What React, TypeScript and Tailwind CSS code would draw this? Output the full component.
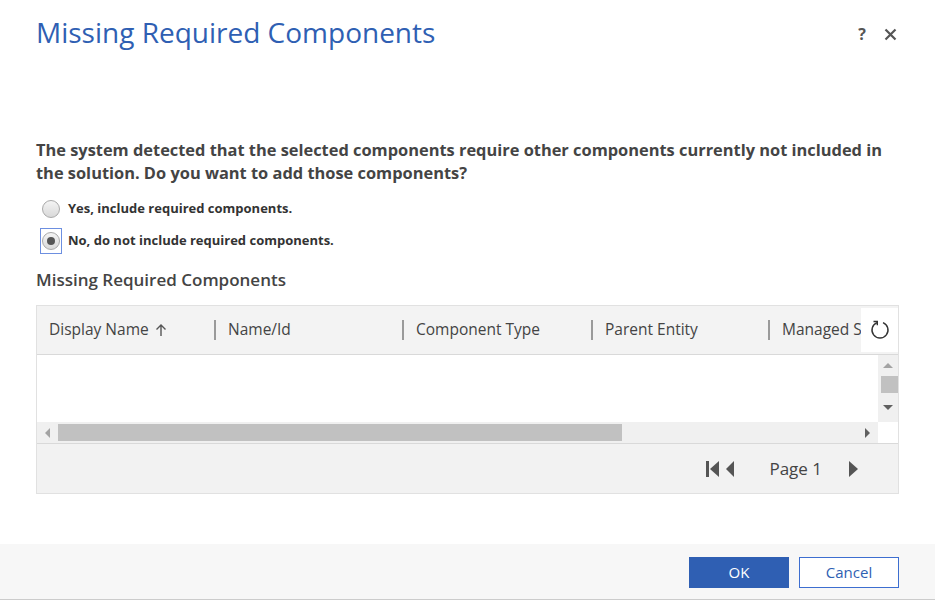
import { useState } from "react";

const COLUMNS = [
  { label: "Display Name", width: "w-[177px]", sort: true },
  { label: "Name/Id", width: "w-[188px]" },
  { label: "Component Type", width: "w-[189px]" },
  { label: "Parent Entity", width: "w-[177px]" },
  { label: "Managed Solution", width: "flex-1" },
];

function Radio({ checked, focused, label, onClick }: { checked: boolean; focused?: boolean; label: string; onClick: () => void }) {
  return (
    <button onClick={onClick} className="flex items-center gap-[6px] h-[26px] text-left">
      <span className={`flex items-center justify-center w-[22px] h-[26px] ${focused ? "border border-[#6d8fe0]" : "border border-transparent"}`}>
        <span className="flex items-center justify-center w-[18px] h-[18px] rounded-full border border-[#a9a9a9] bg-gradient-to-b from-[#f4f4f4] to-[#d9d9d9]">
          {checked && <span className="w-[8px] h-[8px] rounded-full bg-[#555]" />}
        </span>
      </span>
      <span className="text-[13px] font-bold text-[#333]">{label}</span>
    </button>
  );
}

export default function App() {
  const [include, setInclude] = useState(false);

  return (
    <div className="w-[935px] h-[600px] bg-white flex flex-col text-[#444]" style={{ fontFamily: '"Open Sans", "Noto Sans", sans-serif' }}>
      {/* Header */}
      <div className="flex items-start justify-between pl-[36px] pr-[38px] pt-[12px]">
        <h1 className="text-[28px] leading-[40px] text-[#2f5fb3]">Missing Required Components</h1>
        <div className="flex items-center gap-[18px] mt-[14px] text-[#555]">
          <span className="text-[16px] font-bold leading-none">?</span>
          <svg width="13" height="13" viewBox="0 0 13 13" className="stroke-[#555]" strokeWidth="2.2">
            <path d="M1.5 1.5 L11.5 11.5 M11.5 1.5 L1.5 11.5" />
          </svg>
        </div>
      </div>

      {/* Body */}
      <div className="px-[36px] pt-[86px]">
        <p className="text-[16.4px] font-bold leading-[23px] text-[#444]">
          The system detected that the selected components require other components currently not included in the solution. Do you want to add those components?
        </p>

        <div className="flex flex-col gap-[6px] mt-[12px] ml-[4px]">
          <Radio checked={include} label="Yes, include required components." onClick={() => setInclude(true)} />
          <Radio checked={!include} focused label="No, do not include required components." onClick={() => setInclude(false)} />
        </div>

        <h2 className="text-[17px] font-semibold text-[#444] mt-[14px] leading-[24px]">Missing Required Components</h2>

        {/* Grid */}
        <div className="mt-[13px] border border-[#e1e1e1] flex flex-col">
          <div className="flex h-[49px] bg-[#f3f3f3] border-b border-[#d9d9d9] items-center">
            {COLUMNS.map((c, i) => (
              <div key={c.label} className={`${c.width} h-full flex items-center overflow-hidden whitespace-nowrap`}>
                {i > 0 && <span className="w-[2px] h-[20px] bg-[#9a9a9a] mr-[12px] shrink-0" />}
                <span className={`text-[15.5px] text-[#444] ${i === 0 ? "pl-[12px]" : ""}`}>{c.label}</span>
                {c.sort && (
                  <svg width="12" height="14" viewBox="0 0 12 14" className="ml-[6px] stroke-[#555]" strokeWidth="1.4" fill="none">
                    <path d="M6 13 V2 M1.5 6.5 L6 2 L10.5 6.5" />
                  </svg>
                )}
              </div>
            ))}
            <div className="w-[37px] h-[44px] bg-white flex items-center justify-center shrink-0">
              <svg width="22" height="22" viewBox="0 0 22 22" fill="none" className="stroke-[#333]" strokeWidth="1.4">
                <path d="M8 3.6 A8 8 0 1 0 14 3.6" />
                <path d="M4.5 2.5 H8.3 V6.3" />
              </svg>
            </div>
          </div>

          {/* rows area + vertical scrollbar */}
          <div className="flex h-[67px]">
            <div className="flex-1 bg-white" />
            <div className="w-[20px] bg-[#f0f0f0] flex flex-col items-center pt-[8px]">
              <span className="w-0 h-0 border-l-[5px] border-r-[5px] border-b-[5px] border-l-transparent border-r-transparent border-b-[#a3a3a3]" />
              <span className="w-[17px] h-[17px] bg-[#c1c1c1] mt-[8px] ml-[2px]" />
              <span className="w-0 h-0 border-l-[5px] border-r-[5px] border-t-[5px] border-l-transparent border-r-transparent border-t-[#606060] mt-[12px]" />
            </div>
          </div>

          {/* horizontal scrollbar */}
          <div className="flex h-[21px]">
            <div className="flex-1 bg-[#f0f0f0] flex items-center">
              <span className="ml-[8px] w-0 h-0 border-t-[5px] border-b-[5px] border-r-[5px] border-t-transparent border-b-transparent border-r-[#a3a3a3]" />
              <span className="ml-[8px] w-[564px] h-[17px] bg-[#c1c1c1]" />
              <span className="flex-1" />
              <span className="mr-[8px] w-0 h-0 border-t-[5px] border-b-[5px] border-l-[5px] border-t-transparent border-b-transparent border-l-[#606060]" />
            </div>
            <div className="w-[20px] bg-white" />
          </div>

          {/* pager */}
          <div className="h-[50px] bg-[#f2f2f2] border-t border-[#d9d9d9] flex items-center justify-end pr-[38px]">
            <svg width="32" height="18" viewBox="0 0 32 18" className="fill-[#555]">
              <rect x="1" y="1" width="3" height="16" />
              <path d="M14 1 L5 9 L14 17 Z" />
              <path d="M29 1 L21 9 L29 17 Z" />
            </svg>
            <span className="text-[17px] text-[#444] ml-[32px] mr-[26px]">Page 1</span>
            <svg width="12" height="18" viewBox="0 0 12 18" className="fill-[#555]">
              <path d="M1 1 L10 9 L1 17 Z" />
            </svg>
          </div>
        </div>
      </div>

      <div className="flex-1" />

      {/* Footer */}
      <div className="h-[56px] bg-[#f7f7f7] border-b border-[#cccccc] flex items-center justify-end gap-[10px] pr-[36px] pt-[2px]">
        <button className="w-[100px] h-[31px] bg-[#2f5fb3] text-white text-[15px]">OK</button>
        <button className="w-[100px] h-[31px] bg-white border border-[#3d6ed0] text-[#2f5fb3] text-[15px]">Cancel</button>
      </div>
    </div>
  );
}
